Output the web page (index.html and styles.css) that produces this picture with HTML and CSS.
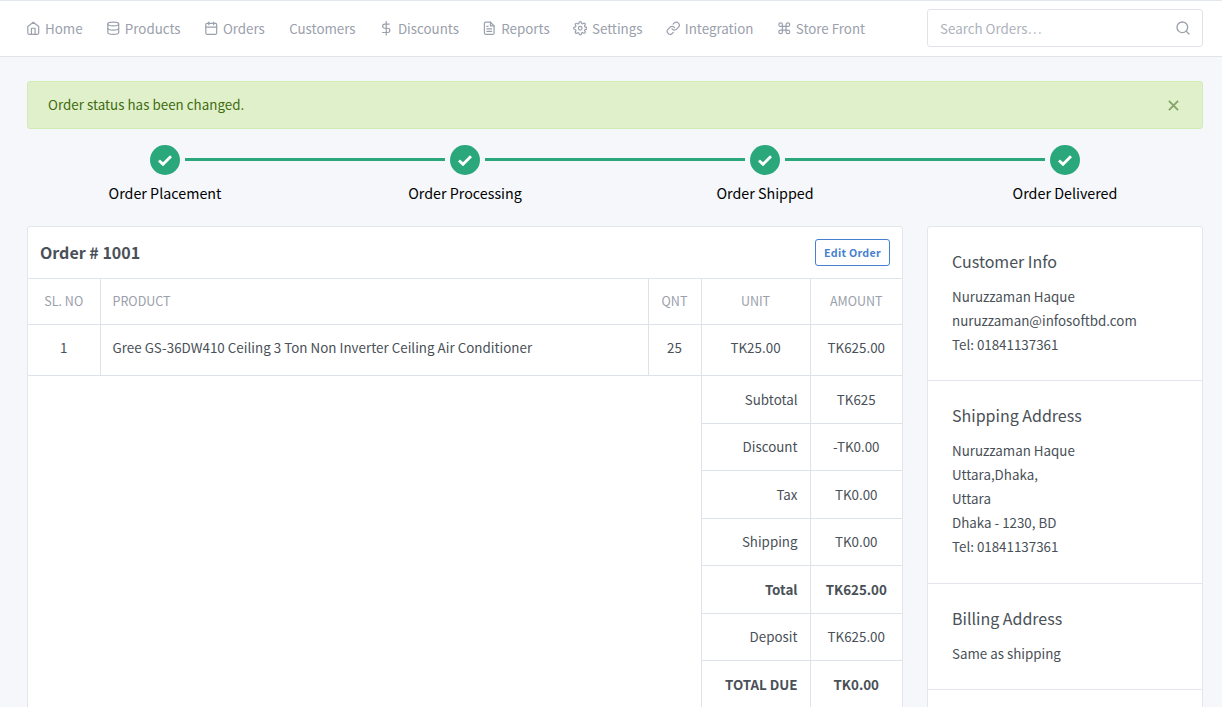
FILE: index.html
```html
<!DOCTYPE html>
<html lang="en">
<head>
<meta charset="utf-8">
<title>Order # 1001</title>
<link rel="stylesheet" href="styles.css">
</head>
<body>
<div class="page">
  <header class="topbar">
    <nav class="nav">
      <a class="nav-link"><svg class="nav-icon" viewBox="0 0 24 24"><path d="M3 9l9-7 9 7v11a2 2 0 0 1-2 2H5a2 2 0 0 1-2-2z"/><polyline points="9 22 9 12 15 12 15 22"/></svg>Home</a>
      <a class="nav-link"><svg class="nav-icon" viewBox="0 0 24 24"><ellipse cx="12" cy="5" rx="9" ry="3"/><path d="M21 12c0 1.66-4 3-9 3s-9-1.34-9-3"/><path d="M3 5v14c0 1.66 4 3 9 3s9-1.34 9-3V5"/></svg>Products</a>
      <a class="nav-link"><svg class="nav-icon" viewBox="0 0 24 24"><rect x="3" y="4" width="18" height="18" rx="2" ry="2"/><line x1="16" y1="2" x2="16" y2="6"/><line x1="8" y1="2" x2="8" y2="6"/><line x1="3" y1="10" x2="21" y2="10"/></svg>Orders</a>
      <a class="nav-link nav-plain">Customers</a>
      <a class="nav-link"><svg class="nav-icon" viewBox="0 0 24 24"><line x1="12" y1="1" x2="12" y2="23"/><path d="M17 5H9.5a3.5 3.5 0 0 0 0 7h5a3.5 3.5 0 0 1 0 7H6"/></svg>Discounts</a>
      <a class="nav-link"><svg class="nav-icon" viewBox="0 0 24 24"><path d="M14 2H6a2 2 0 0 0-2 2v16a2 2 0 0 0 2 2h12a2 2 0 0 0 2-2V8z"/><polyline points="14 2 14 8 20 8"/><line x1="16" y1="13" x2="8" y2="13"/><line x1="16" y1="17" x2="8" y2="17"/><polyline points="10 9 9 9 8 9"/></svg>Reports</a>
      <a class="nav-link"><svg class="nav-icon" viewBox="0 0 24 24"><circle cx="12" cy="12" r="3"/><path d="M19.4 15a1.65 1.65 0 0 0 .33 1.82l.06.06a2 2 0 0 1 0 2.83 2 2 0 0 1-2.83 0l-.06-.06a1.65 1.65 0 0 0-1.82-.33 1.65 1.65 0 0 0-1 1.51V21a2 2 0 0 1-2 2 2 2 0 0 1-2-2v-.09A1.65 1.65 0 0 0 9 19.4a1.65 1.65 0 0 0-1.82.33l-.06.06a2 2 0 0 1-2.83 0 2 2 0 0 1 0-2.83l.06-.06a1.65 1.65 0 0 0 .33-1.82 1.65 1.65 0 0 0-1.51-1H3a2 2 0 0 1-2-2 2 2 0 0 1 2-2h.09A1.65 1.65 0 0 0 4.6 9a1.65 1.65 0 0 0-.33-1.82l-.06-.06a2 2 0 0 1 0-2.83 2 2 0 0 1 2.83 0l.06.06a1.65 1.65 0 0 0 1.82.33H9a1.65 1.65 0 0 0 1-1.51V3a2 2 0 0 1 2-2 2 2 0 0 1 2 2v.09a1.65 1.65 0 0 0 1 1.51 1.65 1.65 0 0 0 1.82-.33l.06-.06a2 2 0 0 1 2.83 0 2 2 0 0 1 0 2.83l-.06.06a1.65 1.65 0 0 0-.33 1.82V9a1.65 1.65 0 0 0 1.51 1H21a2 2 0 0 1 2 2 2 2 0 0 1-2 2h-.09a1.65 1.65 0 0 0-1.51 1z"/></svg>Settings</a>
      <a class="nav-link"><svg class="nav-icon" viewBox="0 0 24 24"><path d="M10 13a5 5 0 0 0 7.54.54l3-3a5 5 0 0 0-7.07-7.07l-1.72 1.71"/><path d="M14 11a5 5 0 0 0-7.54-.54l-3 3a5 5 0 0 0 7.07 7.07l1.71-1.71"/></svg>Integration</a>
      <a class="nav-link"><svg class="nav-icon" viewBox="0 0 24 24"><path d="M18 3a3 3 0 0 0-3 3v12a3 3 0 0 0 3 3 3 3 0 0 0 3-3 3 3 0 0 0-3-3H6a3 3 0 0 0-3 3 3 3 0 0 0 3 3 3 3 0 0 0 3-3V6a3 3 0 0 0-3-3 3 3 0 0 0-3 3 3 3 0 0 0 3 3h12a3 3 0 0 0 3-3 3 3 0 0 0-3-3z"/></svg>Store Front</a>
    </nav>
    <div class="search">
      <span class="search-text">Search Orders…</span>
      <svg class="search-icon" viewBox="0 0 24 24"><circle cx="11" cy="11" r="8"/><line x1="21" y1="21" x2="16.65" y2="16.65"/></svg>
    </div>
  </header>

  <main class="content">
    <div class="alert">
      <span>Order status has been changed.</span>
      <svg class="alert-close" viewBox="0 0 12 12"><path d="M1 1l10 10M11 1L1 11"/></svg>
    </div>

    <div class="stepper">
      <div class="track">
        <span class="dot"><svg viewBox="0 0 16 16"><path d="M2 8.5l4 3.8 8-8"/></svg></span>
        <span class="line"></span>
        <span class="dot"><svg viewBox="0 0 16 16"><path d="M2 8.5l4 3.8 8-8"/></svg></span>
        <span class="line"></span>
        <span class="dot"><svg viewBox="0 0 16 16"><path d="M2 8.5l4 3.8 8-8"/></svg></span>
        <span class="line"></span>
        <span class="dot"><svg viewBox="0 0 16 16"><path d="M2 8.5l4 3.8 8-8"/></svg></span>
      </div>
      <div class="labels">
        <span>Order Placement</span>
        <span>Order Processing</span>
        <span>Order Shipped</span>
        <span>Order Delivered</span>
      </div>
    </div>

    <div class="columns">
      <section class="card order">
        <div class="card-header">
          <h3 class="card-title">Order # 1001</h3>
          <a class="btn-edit">Edit Order</a>
        </div>
        <table class="table">
          <colgroup>
            <col class="c-sl"><col class="c-product"><col class="c-qnt"><col class="c-unit"><col class="c-amount">
          </colgroup>
          <thead>
            <tr>
              <th class="center">SL. NO</th>
              <th>PRODUCT</th>
              <th class="center">QNT</th>
              <th class="center">UNIT</th>
              <th class="center">AMOUNT</th>
            </tr>
          </thead>
          <tbody>
            <tr class="item">
              <td class="center">1</td>
              <td>Gree GS-36DW410 Ceiling 3 Ton Non Inverter Ceiling Air Conditioner</td>
              <td class="center">25</td>
              <td class="center">TK25.00</td>
              <td class="center">TK625.00</td>
            </tr>
            <tr>
              <td class="blank" colspan="3" rowspan="8"></td>
              <td class="right">Subtotal</td>
              <td class="center">TK625</td>
            </tr>
            <tr><td class="right">Discount</td><td class="center">-TK0.00</td></tr>
            <tr><td class="right">Tax</td><td class="center">TK0.00</td></tr>
            <tr><td class="right">Shipping</td><td class="center">TK0.00</td></tr>
            <tr class="strong"><td class="right">Total</td><td class="center">TK625.00</td></tr>
            <tr><td class="right">Deposit</td><td class="center">TK625.00</td></tr>
            <tr class="strong"><td class="right">TOTAL DUE</td><td class="center">TK0.00</td></tr>
          </tbody>
        </table>
      </section>

      <aside class="card side">
        <section class="side-block">
          <h4 class="side-title">Customer Info</h4>
          <p class="side-text">Nuruzzaman Haque<br>nuruzzaman@infosoftbd.com<br>Tel: 01841137361</p>
        </section>
        <section class="side-block">
          <h4 class="side-title">Shipping Address</h4>
          <p class="side-text">Nuruzzaman Haque<br>Uttara,Dhaka,<br>Uttara<br>Dhaka - 1230, BD<br>Tel: 01841137361</p>
        </section>
        <section class="side-block">
          <h4 class="side-title">Billing Address</h4>
          <p class="side-text">Same as shipping</p>
        </section>
      </aside>
    </div>
  </main>
</div>
</body>
</html>
```

FILE: styles.css
```css
* { box-sizing: border-box; }
html, body { margin: 0; padding: 0; }
body {
  font-family: "Noto Sans CJK SC", "Noto Sans", sans-serif;
  font-size: 13.35px;
  line-height: 24px;
  color: #495057;
  background: #f5f7fb;
}
.page { height: 707px; overflow: hidden; }

.topbar {
  display: flex;
  align-items: center;
  justify-content: space-between;
  height: 57px;
  padding: 0 19px 0 26px;
  background: #fff;
  border-top: 1px solid #e3e8f0;
  border-bottom: 1px solid #dfe3ea;
}
.nav { display: flex; gap: 23.3px; }
.nav-link { display: flex; align-items: center; color: #9aa0ac; white-space: nowrap; }
.nav-plain { margin-left: 1px; }
.nav-icon {
  width: 14.5px;
  height: 14.5px;
  margin-right: 4.5px;
  fill: none;
  stroke: #9aa0ac;
  stroke-width: 2;
  stroke-linecap: round;
  stroke-linejoin: round;
}
.search {
  display: flex;
  align-items: center;
  justify-content: space-between;
  width: 276px;
  height: 38px;
  margin-bottom: 2px;
  padding: 0 11.5px 0 12px;
  background: #fff;
  border: 1px solid #e0e4ea;
  border-radius: 3px;
  color: #adb2bb;
}
.search-text { padding-top: 2px; }
.search-icon {
  width: 16px;
  height: 16px;
  fill: none;
  stroke: #9aa0ac;
  stroke-width: 2;
  stroke-linecap: round;
}

.content { padding: 24px 19px 0 27px; }

.alert {
  display: flex;
  align-items: center;
  justify-content: space-between;
  height: 48px;
  padding: 0 23px 0 20px;
  background: #dff0cb;
  border: 1px solid #d2ebb5;
  border-radius: 3px;
  color: #3f6b0e;
  letter-spacing: 0.03px;
}
.alert-close {
  width: 11px;
  height: 11px;
  fill: none;
  stroke: #86a36a;
  stroke-width: 2;
}

.stepper { margin: 16px -12px 0; }
.track {
  display: flex;
  align-items: center;
  gap: 5px;
  padding: 0 135px;
}
.dot {
  display: flex;
  align-items: center;
  justify-content: center;
  flex: none;
  width: 30px;
  height: 30px;
  border-radius: 50%;
  background: #2aa87c;
}
.dot svg {
  width: 16px;
  height: 16px;
  fill: none;
  stroke: #fff;
  stroke-width: 2.8;
}
.line { flex: 1; height: 3px; margin-bottom: 1px; background: #2aa87c; }
.labels {
  display: grid;
  grid-template-columns: repeat(4, 1fr);
  margin-top: 6px;
  text-align: center;
  font-size: 14.3px;
  color: #000;
}

.columns {
  display: grid;
  grid-template-columns: 876px 276px;
  gap: 24px;
  margin-top: 21px;
}
.card {
  background: #fff;
  border: 1px solid #e3e6ec;
  border-radius: 3px;
}
.card-header {
  display: flex;
  align-items: center;
  justify-content: space-between;
  height: 52px;
  padding: 0 12px;
  border-bottom: 1px solid #e0e4ec;
}
.card-title {
  margin: 0 0 2px;
  font-size: 16px;
  font-weight: 700;
  line-height: 22px;
  color: #495057;
}
.btn-edit {
  display: block;
  height: 27px;
  padding: 0 8px;
  font-size: 10.7px;
  font-weight: 600;
  line-height: 25px;
  letter-spacing: 0.3px;
  color: #467fcf;
  border: 1px solid #467fcf;
  border-radius: 3px;
}

.table {
  width: 874px;
  table-layout: fixed;
  border-collapse: collapse;
}
.c-sl { width: 72px; }
.c-product { width: 548px; }
.c-qnt { width: 53px; }
.c-unit { width: 109px; }
.c-amount { width: 92px; }
.table th, .table td {
  padding: 12.5px 12px 11.5px;
  line-height: 22.5px;
  border: 1px solid #dee2ea;
  text-align: left;
}
.table tr > :first-child { border-left: 0; }
.table tr > :last-child { border-right: 0; }
.table th {
  padding: 11.25px 12px;
  font-size: 12.5px;
  font-weight: 400;
  color: #9aa0ac;
  border-top: 0;
}
.table .item td { height: 51px; padding: 12px; vertical-align: top; letter-spacing: 0.03px; }
.table .center { text-align: center; }
.table .right { text-align: right; }
.table .blank { border-bottom: 0; }
.strong td { font-weight: 700; }

.side-block { padding: 24px 24px 23.6px; border-bottom: 1px solid #e3e6ec; }
.side-title {
  margin: 0 0 12.4px;
  font-size: 16px;
  font-weight: 400;
  line-height: 21.4px;
  color: #495057;
}
.side-text { margin: 0; }
```
